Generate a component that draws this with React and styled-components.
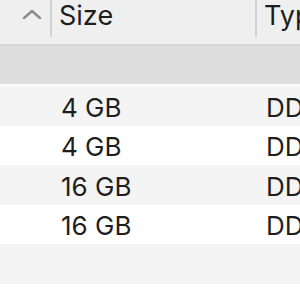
import React from "react";
import styled, { createGlobalStyle } from "styled-components";

const Global = createGlobalStyle`
  html, body { margin: 0; padding: 0; background: #fff; }
  body { font-family: Inter, "Noto Sans", sans-serif; color: #222; }
`;

const Table = styled.div`
  width: 300px;
  height: 300px;
  overflow: hidden;
  background: #fff;
`;

const Header = styled.div`
  display: grid;
  grid-template-columns: 52px 205px 1fr;
  height: 46px;
  box-sizing: border-box;
  background: #efefef;
  border-bottom: 2px solid #d6d6d6;
`;

const HeadCell = styled.div`
  height: 37px;
  display: flex;
  align-items: center;
  box-sizing: border-box;
  padding-left: ${(p) => (p.$icon ? "22px" : "7px")};
  padding-bottom: ${(p) => (p.$icon ? "9px" : "6px")};
  font-size: 27px;
  white-space: nowrap;
  overflow: hidden;
  color: #1e1e1e;
  border-right: ${(p) => (p.$divider ? "2px solid #d2d2d2" : "none")};
`;

const Band = styled.div`
  height: 38px;
  background: #dddddd;
  border-bottom: 2px solid #fbfbfb;
`;

const Row = styled.div`
  display: grid;
  grid-template-columns: 52px 205px 1fr;
  height: 39.5px;
  align-items: center;
  background: ${(p) => (p.$alt ? "#f4f4f4" : "#fff")};
`;

const Cell = styled.div`
  padding-left: ${(p) => p.$pad || 0}px;
  padding-top: 3px;
  font-size: 26px;
  white-space: nowrap;
  overflow: hidden;
  color: #1e1e1e;
`;

const Chevron = () => (
  <svg width="20" height="10" viewBox="0 0 20 10">
    <path d="M2 9 L10 2 L18 9" fill="none" stroke="#8a8a8a" strokeWidth="2.4" strokeLinecap="round" />
  </svg>
);

const rows = ["4 GB", "4 GB", "16 GB", "16 GB"];

export default function App() {
  return (
    <>
      <Global />
      <Table>
        <Header>
          <HeadCell $divider $icon>
            <Chevron />
          </HeadCell>
          <HeadCell $divider>Size</HeadCell>
          <HeadCell>Type</HeadCell>
        </Header>
        <Band />
        {rows.map((r, i) => (
          <Row key={i} $alt={i % 2 === 0}>
            <Cell />
            <Cell $pad={9}>{r}</Cell>
            <Cell $pad={9}>DDR4</Cell>
          </Row>
        ))}
        <Row $alt />
        <Row />
      </Table>
    </>
  );
}
